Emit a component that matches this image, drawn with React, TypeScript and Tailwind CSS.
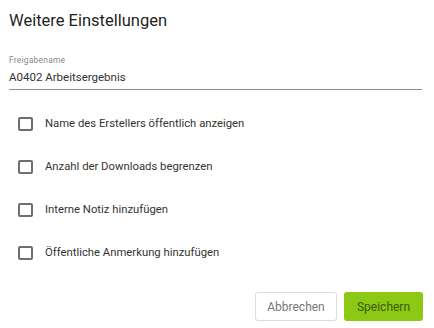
import React from "react";

const items = [
  "Name des Erstellers öffentlich anzeigen",
  "Anzahl der Downloads begrenzen",
  "Interne Notiz hinzufügen",
  "Öffentliche Anmerkung hinzufügen",
];

export default function App() {
  return (
    <div className="w-[434px] h-[328px] bg-white font-['Roboto',sans-serif] text-[#212121] overflow-hidden">
      <div className="pl-[9px] pr-[12px] pt-[9px]">
        <h1 className="text-[16.5px] leading-[24px] font-normal text-[#1f1f1f]">Weitere Einstellungen</h1>
        <div className="mt-[21px]">
          <div className="text-[8.5px] leading-[12px] tracking-[0.2px] text-[#8a8a8a]">Freigabename</div>
          <div className="mt-[3px] pb-[4px] border-b border-[#8c8c8c] text-[11.5px] leading-[16px] text-[#333]">
            A0402 Arbeitsergebnis
          </div>
        </div>
      </div>
      <div className="flex flex-col pl-[18px] mt-[27px] gap-[29px]">
        {items.map((t) => (
          <label key={t} className="flex items-center h-[14px]">
            <span className="w-[15px] h-[14px] border-2 border-[#6e6e6e] rounded-[2px] box-border shrink-0" />
            <span className="ml-[12px] text-[11.3px] leading-[14px] text-[#333]">{t}</span>
          </label>
        ))}
      </div>
      <div className="flex justify-end gap-[7px] pr-[11px] mt-[32px]">
        <button className="w-[82px] h-[29px] border border-[#dcdcdc] rounded-[3px] bg-white text-[12px] text-[#777]">
          Abbrechen
        </button>
        <button className="w-[79px] h-[29px] rounded-[3px] bg-[#8cc814] text-[12px] text-[#3d5a08]">
          Speichern
        </button>
      </div>
    </div>
  );
}
